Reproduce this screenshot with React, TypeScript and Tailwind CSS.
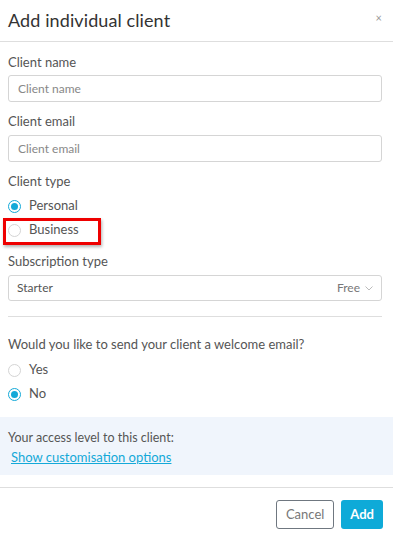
import React, { useState } from 'react';

const font = { fontFamily: 'Lato, "Open Sans", sans-serif' };

const Radio = ({ checked, label, onClick }: { checked: boolean; label: string; onClick: () => void }) => (
  <button type="button" onClick={onClick} className="flex items-center gap-[8px] h-[24px] text-[13px] text-[#555]">
    <span
      className={`flex items-center justify-center w-[13px] h-[13px] rounded-full border ${
        checked ? 'border-[#14a9d8]' : 'border-[#d4d4d4]'
      }`}
    >
      {checked && <span className="w-[7px] h-[7px] rounded-full bg-[#14a9d8]" />}
    </span>
    <span>{label}</span>
  </button>
);

export default function App() {
  const [clientType, setClientType] = useState('personal');
  const [welcome, setWelcome] = useState('no');

  return (
    <div className="w-[393px] h-[535px] bg-white text-[#444] relative" style={font}>
      {/* header */}
      <div className="flex items-center justify-between h-[42px] px-[8px] border-b border-[#dedede]">
        <h1 className="text-[18px] text-[#333] tracking-[0.1px]">Add individual client</h1>
        <span className="text-[11px] text-[#999] mr-[3px] -mt-[4px]">×</span>
      </div>

      <div className="pl-[8px] pr-[11px] pt-[11px]">
        <div className="text-[13px] text-[#555] h-[18px]">Client name</div>
        <input
          placeholder="Client name"
          className="mt-[4px] w-full h-[27px] border border-[#d5d5d5] rounded-[3px] px-[9px] text-[12px] placeholder:text-[#888] outline-none"
        />
        <div className="text-[13px] text-[#555] h-[18px] mt-[10px]">Client email</div>
        <input
          placeholder="Client email"
          className="mt-[5px] w-full h-[27px] border border-[#d5d5d5] rounded-[3px] px-[9px] text-[12px] placeholder:text-[#888] outline-none"
        />
        <div className="text-[13px] text-[#555] h-[18px] mt-[10px]">Client type</div>
        <div className="flex flex-col mt-[4px]">
          <Radio checked={clientType === 'personal'} label="Personal" onClick={() => setClientType('personal')} />
          <Radio checked={clientType === 'business'} label="Business" onClick={() => setClientType('business')} />
        </div>
        <div className="text-[13px] text-[#555] h-[18px] mt-[10px]">Subscription type</div>
        <div className="mt-[5px] flex items-center justify-between h-[26px] border border-[#d5d5d5] rounded-[3px] px-[8px] text-[12px] text-[#555]">
          <span>Starter</span>
          <span className="flex items-center gap-[5px] text-[#777]">
            Free
            <svg width="8" height="5" viewBox="0 0 8 5" fill="none" stroke="#bbb" strokeWidth="1">
              <path d="M0.5 0.5 L4 4 L7.5 0.5" />
            </svg>
          </span>
        </div>
        <div className="border-t border-[#dedede] mt-[15px]" />
        <div className="text-[13px] text-[#555] mt-[18px] h-[18px]">Would you like to send your client a welcome email?</div>
        <div className="flex flex-col mt-[5px]">
          <Radio checked={welcome === 'yes'} label="Yes" onClick={() => setWelcome('yes')} />
          <Radio checked={welcome === 'no'} label="No" onClick={() => setWelcome('no')} />
        </div>
      </div>

      <div className="mt-[11px] bg-[#f0f5fc] h-[58px] px-[8px] pt-[12px]">
        <div className="text-[12.5px] text-[#555]">Your access level to this client:</div>
        <a href="#" className="block ml-[3px] text-[13px] text-[#14a9d8] underline">
          Show customisation options
        </a>
      </div>

      <div className="border-t border-[#dedede] mt-[12px] flex justify-end gap-[7px] px-[10px] pt-[12px]">
        <button className="h-[29px] px-[9px] border border-[#6f7780] rounded-[3px] text-[13px] text-[#777]">Cancel</button>
        <button className="h-[29px] px-[9px] rounded-[3px] bg-[#0eaad8] text-white text-[13px] font-bold">Add</button>
      </div>

      {/* highlight annotation */}
      <div className="absolute left-[3px] top-[218px] w-[98px] h-[27px] border-[3px] border-[#ee0000] shadow-[1px_2px_3px_rgba(0,0,0,0.3)] pointer-events-none" />
    </div>
  );
}
